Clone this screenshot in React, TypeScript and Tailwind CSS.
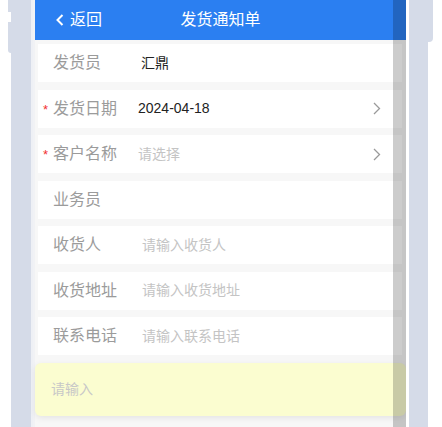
import type { ReactNode } from 'react';

const font = { fontFamily: '"Liberation Sans", "Noto Sans CJK SC", sans-serif' };

function Chevron() {
  return (
    <svg width="8" height="13" viewBox="0 0 8 13" className="shrink-0">
      <path d="M1 1 L6.5 6.5 L1 12" fill="none" stroke="#9a9a9a" strokeWidth="1.3" />
    </svg>
  );
}

interface RowProps {
  label: string;
  required?: boolean;
  arrow?: boolean;
  children?: ReactNode;
}

function Row({ label, required, arrow, children }: RowProps) {
  return (
    <div className="relative ml-[3px] mr-[4px] h-[38px] bg-white flex items-center pl-[15px] pr-[21px]">
      {required && (
        <span className="absolute left-[5px] top-[13px] text-[13px] leading-none text-[#f23030]">*</span>
      )}
      <span className="w-[85px] shrink-0 text-[16px] text-[#9b9b9b]">{label}</span>
      <div className="flex-1 min-w-0 text-[14px]">{children}</div>
      {arrow && <Chevron />}
    </div>
  );
}

export default function App() {
  return (
    <div className="relative w-[442px] h-[427px] bg-white flex overflow-hidden" style={font}>
      {/* left frame */}
      <div className="w-[33px] h-full flex shrink-0">
        <div className="w-[11px] flex flex-col items-end">
          <div className="w-[3px] h-[12px] bg-[#d5dbe8]" />
          <div className="w-[3px] h-[10px] bg-white" />
          <div className="w-[3px] h-[31px] bg-[#d5dbe8] rounded-bl-sm" />
        </div>
        <div className="w-[20px] h-full bg-[#d5dbe8]" />
        <div className="w-[2px] h-full bg-[#eef0f5]" />
      </div>

      {/* phone */}
      <div className="w-[373px] h-full bg-[#f7f7f7] flex flex-col shrink-0 border-l-2 border-[#f1f2f5]">
        <div className="h-[40px] bg-[#2b7ff1] flex items-center relative text-white text-[16px] shrink-0">
          <div className="flex items-center pl-[21px] gap-[6px]">
            <svg width="8" height="12" viewBox="0 0 8 12">
              <path d="M6.5 1 L1.5 6 L6.5 11" fill="none" stroke="white" strokeWidth="2" />
            </svg>
            <span>返回</span>
          </div>
          <span className="absolute left-0 right-0 text-center pointer-events-none">发货通知单</span>
        </div>

        <div className="flex flex-col gap-[7.5px] pt-[4px]">
          <Row label="发货员">
            <span className="pl-[3px] text-[#222]">汇鼎</span>
          </Row>
          <Row label="发货日期" required arrow>
            <span className="text-[#222]">2024-04-18</span>
          </Row>
          <Row label="客户名称" required arrow>
            <span className="text-[#c4c4c4]">请选择</span>
          </Row>
          <Row label="业务员" />
          <Row label="收货人">
            <span className="pl-[4px] text-[#c4c4c4]">请输入收货人</span>
          </Row>
          <Row label="收货地址">
            <span className="pl-[4px] text-[#c4c4c4]">请输入收货地址</span>
          </Row>
          <Row label="联系电话">
            <span className="pl-[4px] text-[#c4c4c4]">请输入联系电话</span>
          </Row>
        </div>

        <div className="mt-[8px] h-[53px] rounded-md bg-[#fbfdd0] shadow-[0_2px_6px_rgba(0,0,0,0.08)] flex items-center pl-[16px] text-[14px] text-[#c8c8c8] shrink-0">
          请输入
        </div>
      </div>

      {/* right frame */}
      <div className="w-[36px] h-full flex shrink-0">
        <div className="w-[3px] h-full bg-white" />
        <div className="w-[19px] h-full bg-[#d5dbe8]" />
        <div className="w-[5px] h-[42px] bg-[#d5dbe8] rounded-br-sm" />
      </div>

      {/* scroll shadow strip */}
      <div className="absolute top-0 left-[393px] w-[13px] h-full bg-black/20 pointer-events-none" />
    </div>
  );
}
